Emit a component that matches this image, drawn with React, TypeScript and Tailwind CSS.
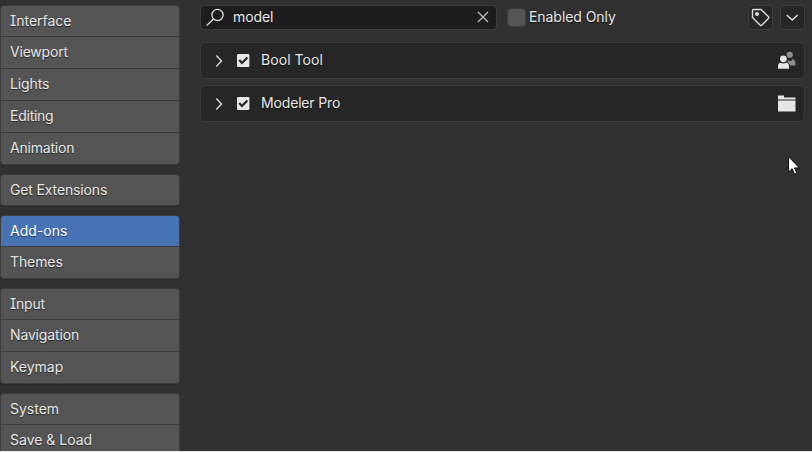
import React from 'react';

const GROUPS: string[][] = [
    ['Interface', 'Viewport', 'Lights', 'Editing', 'Animation'],
    ['Get Extensions'],
    ['Add-ons', 'Themes'],
    ['Input', 'Navigation', 'Keymap'],
    ['System', 'Save & Load'],
];

const ACTIVE = 'Add-ons';

const TRACKING: Record<string, string> = {
    Viewport: 'tracking-[-0.2px]',
    Lights: 'tracking-[-0.1px]',
    Editing: 'tracking-[-0.25px]',
    Animation: 'tracking-[-0.2px]',
    'Get Extensions': 'tracking-[-0.14px]',
    Themes: 'tracking-[-0.1px]',
    Input: 'tracking-[-0.2px]',
    Navigation: 'tracking-[-0.15px]',
};

const CheckedBox = () => (
    <svg width="13" height="13" viewBox="0 0 13 13" className="-mt-px shrink-0">
        <rect x="0" y="0" width="12.4" height="13" rx="1.2" fill="#e6e6e6" />
        <path d="M2.200 6 5 9 10.400 3.400" fill="none" stroke="#252525" strokeWidth="2.2" />
    </svg>
);

const UsersIcon = () => (
    <svg width="18" height="18" viewBox="0 0 18 18" className="-mt-px">
        <g fill="#8f8f8f">
            <circle cx="11.8" cy="3.8" r="3.1" />
            <path d="M9.500 9.500 13.200 10l1.600-2c1.500.4 2.500 1.600 2.500 3.500v3h-5c-.6-1.600-1.500-2.300-2.800-3z" />
        </g>
        <g fill="#e6e6e6">
            <circle cx="5.400" cy="7.800" r="4.100" fill="#262626" />
            <circle cx="5.400" cy="7.800" r="3.400" />
            <path d="M0 17.800v-2.600c0-1.900 1-3.300 2.600-3.500 1.700 1 4 1 5.700 0 1.700.2 2.700 1.600 2.700 3.500v2.600z" />
        </g>
    </svg>
);

const FolderIcon = () => (
    <svg width="18" height="18" viewBox="0 0 18 18" fill="#e6e6e6">
        <path d="M0 4.500V.5h6v2h11.500v2z" />
        <path d="M0 5.500h17.500v11H0z" />
    </svg>
);

const Addon: React.FC<{ name: string; icon: React.ReactNode }> = ({ name, icon }) => (
    <div className="flex h-[37px] items-center rounded-[5px] border border-[#3a3a3a] bg-[#262626] pl-[13px] pr-2">
        <svg width="10" height="14" viewBox="0 0 10 14" className="mr-[13px]">
            <path d="M2.300 1.500 7.500 7l-5.200 5.500" fill="none" stroke="#d8d8d8" strokeWidth="1.4" />
        </svg>
        <CheckedBox />
        <span className={`ml-[11px] flex-1 pb-px [text-shadow:0_1px_1px_#0008] ${name === 'Modeler Pro' ? 'tracking-[-0.16px]' : 'tracking-[0.06px]'}`}>{name}</span>
        {icon}
    </div>
);

const Sidebar = () => (
    <nav className="flex w-[180px] shrink-0 flex-col gap-[9px] pt-[5px]">
        {GROUPS.map((items) => (
            <div
                key={items[0]}
                className="flex shrink-0 flex-col gap-px overflow-hidden rounded-[4px] border border-[#3d3d3d] bg-[#3d3d3d] shadow-[0_1px_0_#2a2a2a]"
            >
                {items.map((item, i) => (
                    <button
                        key={item}
                        className={`flex items-center pl-[9px] text-left [text-shadow:0_1px_1px_#0008] ${i === 0 ? 'h-[30px]' : 'h-[31px] pb-0.5'} ${item === ACTIVE ? 'bg-[#4772b3] text-white' : 'bg-[#545454]'} ${TRACKING[item] ?? ''}`}
                    >
                        {item}
                    </button>
                ))}
            </div>
        ))}
    </nav>
);

const App = () => (
    <div className="h-[452px] w-[812px] overflow-hidden border-b border-[#e8e8e8] bg-[#303030] font-['Inter','Liberation_Sans',sans-serif] text-[14px] leading-5 text-[#e6e6e6] [font-feature-settings:'cv08'_1]">
        <div className="flex">
            <Sidebar />
            <main className="flex flex-1 flex-col gap-1.5 pt-[5px] pr-[7px] pl-5">
                <div className="mb-[6px] flex h-[25px] items-center">
                    <div className="flex h-[25px] w-[297px] items-center rounded-[4px] border border-[#3d3d3d] bg-[#1d1d1d] pr-[7px] pl-[5px]">
                        <svg width="19" height="19" viewBox="0 0 19 19" className="mr-2">
                            <g fill="none" stroke="#dcdcdc" strokeWidth="1.3">
                                <circle cx="11.500" cy="7" r="5.600" />
                                <path d="M7.500 11 .7 17.500" />
                            </g>
                        </svg>
                        <span className="flex-1 pb-0.5 tracking-[-0.1px]">model</span>
                        <svg width="12" height="12" viewBox="0 0 12 12" className="-mt-px">
                            <path d="m1 1 10 10M11 1 1 11" stroke="#bdbdbd" strokeWidth="1.3" />
                        </svg>
                    </div>
                    <div className="ml-[10px] h-[19px] w-[19px] rounded-[4px] border border-[#3d3d3d] bg-[#545454]" />
                    <span className="ml-[3px] flex-1 pb-0.5 tracking-[-0.06px] [text-shadow:0_1px_1px_#0008]">Enabled Only</span>
                    <button className="mr-[7px] flex h-[25px] w-[25px] items-center justify-center rounded-[4px] border border-[#3d3d3d] bg-[#262626]">
                        <svg width="19" height="19" viewBox="0 0 19 19">
                            <path d="M1.500 2.500q0-1 1-1L10 1.500l7.300 7q1 1 0 2L11 17q-1 1-2 0L1.500 9.500z" fill="none" stroke="#dcdcdc" strokeWidth="1.4" />
                            <circle cx="6" cy="6" r="2" fill="#dcdcdc" />
                        </svg>
                    </button>
                    <button className="flex h-[25px] w-[25px] items-center justify-center rounded-[4px] border border-[#3d3d3d] bg-[#262626]">
                        <svg width="14" height="9" viewBox="0 0 14 9">
                            <path d="M.7 1.900 6.200 7.100 11.700 1.900" fill="none" stroke="#dcdcdc" strokeWidth="1.4" />
                        </svg>
                    </button>
                </div>
                <Addon name="Bool Tool" icon={<UsersIcon />} />
                <Addon name="Modeler Pro" icon={<FolderIcon />} />
            </main>
        </div>
        <svg width="14" height="21" viewBox="0 0 14 21" className="absolute top-[155px] left-[787px]">
            <path d="M1.500 1.500v15.500l3.600-3.300 2.500 5.500 2.300-1-2.400-5.300h4.800z" fill="#fff" stroke="#111" strokeWidth="1" />
        </svg>
    </div>
);

export default App;
